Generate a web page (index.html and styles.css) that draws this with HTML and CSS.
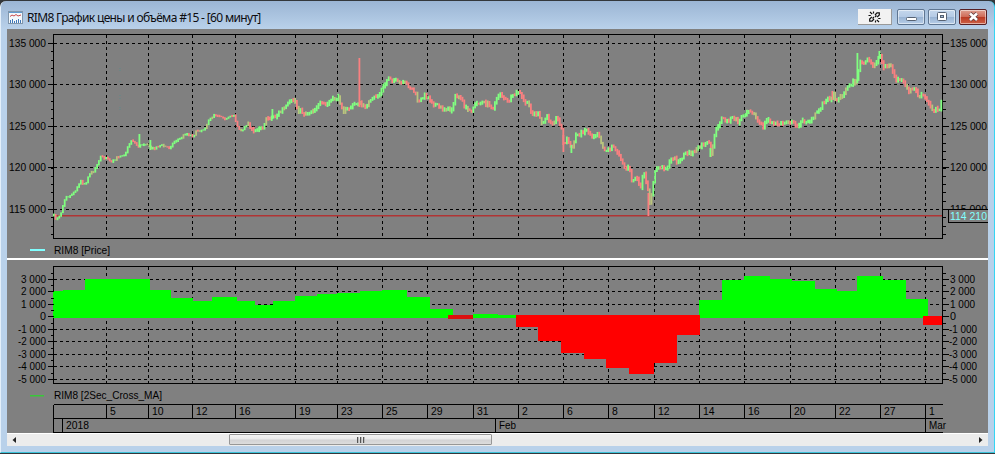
FILE: index.html
```html
<!DOCTYPE html>
<html lang="ru">
<head>
  <meta charset="UTF-8">
  <title>RIM8 График цены и объёма</title>
  <link rel="stylesheet" href="styles.css">
</head>
<body>
  <div class="window">
    <div class="titlebar">
      <svg class="app-icon" width="15" height="13" viewBox="0 0 15 13">
        <rect x="0.5" y="0.5" width="14" height="12" fill="#f4f8fb" stroke="#8196ab"/>
        <rect x="1" y="1" width="13" height="1" fill="#5f9bd0"/>
        <path d="M2 5.5l2-1.5 2 1 2-1.5 2 1.5 3-1" fill="none" stroke="#c9484c"/>
        <path d="M2.5 12V9M4.5 12V8M6.5 12v-2M8.5 12V9M10.5 12V8M12.5 12V9" stroke="#3f78b8"/>
      </svg>
      <span class="title">RIM8 График цены и объёма #15 - [60 минут]</span>
      <div class="buttons">
        <div class="link-btn">
          <svg width="13" height="12" viewBox="0 0 13 12" fill="none" stroke="#111" stroke-width="1.2">
            <path d="M7 4l2-2.200h2.300v2.200L9.200 6M6 8l-2 2.200H1.700V8L3.800 6M4.500 7.500l1.500-1.500M7 6l1.500-1.500M2 1l2.200 2.200M5.500 0.500v2M0.500 4.500h2.300M11 11L8.800 8.800M7.500 11.500v-2M12.500 7.500h-2.300"/>
          </svg>
        </div>
        <div class="win-btn">
          <svg width="26" height="14" viewBox="0 0 26 14"><rect x="8.500" y="7.500" width="10" height="3" rx="1" fill="#fff" stroke="#566273"/></svg>
        </div>
        <div class="win-btn">
          <svg width="26" height="14" viewBox="0 0 26 14"><rect x="8.500" y="2.500" width="9" height="8" rx="1" fill="#fff" stroke="#566273"/><rect x="11.500" y="5.500" width="3" height="2" fill="#a5bcd8" stroke="#566273"/></svg>
        </div>
        <div class="win-btn close">
          <svg width="26" height="14" viewBox="0 0 26 14"><path d="M10 3.500l7 6.500M17 3.500L10 10" stroke="#5d3a3c" stroke-width="4.200"/><path d="M10 3.500l7 6.500M17 3.500L10 10" stroke="#fff" stroke-width="2.600"/></svg>
        </div>
      </div>
    </div>
    <div class="content">
      <svg class="pane" id="price" width="981" height="229" viewBox="7 29 981 229"></svg>
      <div class="splitter"></div>
      <svg class="pane" id="indicator" width="981" height="173" viewBox="7 260 981 173"></svg>
      <div class="scrollbar">
        <svg width="14" height="12" viewBox="0 0 14 12"><path d="M9 3v6L5.500 6z" fill="#222"/></svg>
        <div class="track"><div class="thumb"><i></i><i></i><i></i></div></div>
        <svg width="14" height="12" viewBox="0 0 14 12"><path d="M5 3v6L8.500 6z" fill="#222"/></svg>
      </div>
    </div>
  </div>
  <script src="chart.js"></script>
</body>
</html>
```
FILE: styles.css
```css
body {
  margin: 0;
  background: #33373b;
  overflow: hidden;
}

.window {
  box-sizing: border-box;
  width: 995px;
  height: 452px;
  margin-top: 1px;
  padding: 0 6px 5px;
  border-left: 1px solid #e3effa;
  border-right: 1px solid #35d5f3;
  border-bottom: 1px solid #3cc3d9;
  border-radius: 6px 6px 0 0;
  background: linear-gradient(#9bb5d4 0, #b9d1ea 28px, #b9d1ea 100%);
}

.titlebar {
  display: flex;
  align-items: center;
  height: 28px;
  padding-top: 4px;
  padding-right: 1px;
  box-sizing: border-box;
}

.app-icon {
  margin: 0 4px 0 1px;
}

.title {
  font: 12px "Noto Sans", sans-serif;
  letter-spacing: -0.66px;
  color: #0c0c10;
  white-space: nowrap;
}

.buttons {
  display: flex;
  margin-left: auto;
  gap: 3px;
}

.link-btn {
  display: flex;
  align-items: center;
  justify-content: center;
  width: 33px;
  height: 15px;
  margin-right: 2px;
  background: #f2f2f2;
  border-right: 1px solid #9a9a9a;
  border-bottom: 1px solid #9a9a9a;
}

.win-btn {
  width: 26px;
  height: 14px;
  border: 1px solid #5f7692;
  border-radius: 2px;
  background: linear-gradient(#c5d7ec 0, #b4cae5 50%, #98b3d3 51%, #b7cee8 100%);
  box-shadow: inset 0 0 0 1px rgba(255, 255, 255, 0.5);
}

.win-btn svg {
  display: block;
}

.close {
  border-color: #571f24;
  background: linear-gradient(#dfa092 0, #cf6b58 48%, #b93822 50%, #cd6248 100%);
}

.content {
  width: 981px;
}

.pane {
  display: block;
  background: #808080;
}

.splitter {
  height: 2px;
  background: #fff;
}

.axis {
  fill: none;
  stroke: #000;
  shape-rendering: crispEdges;
}

.grid {
  stroke: #000;
  stroke-dasharray: 3 3;
  shape-rendering: crispEdges;
}

.up {
  fill: #80ff80;
}

.down {
  fill: #f98080;
}

.mixed {
  fill: #b9c47e;
}

.pos {
  fill: #00ff00;
}

.neg {
  fill: #ff0000;
}

.flat {
  fill: #dc1010;
}

.legend {
  fill: #38c838;
}

.last {
  fill: #b03434;
}

.mark {
  fill: #808080;
  stroke: #000;
}

text {
  font: 11.5px "Liberation Sans", Arial, sans-serif;
  fill: #000;
}

.mark-text {
  fill: #80ffff;
}

.ghost {
  fill: #6f8585;
}

.scrollbar {
  display: flex;
  height: 12px;
  border-top: 1px solid #fff;
  background: #ececec;
}

.track {
  flex: 1;
}

.thumb {
  display: flex;
  align-items: center;
  justify-content: center;
  gap: 1px;
  box-sizing: border-box;
  width: 263px;
  height: 11px;
  margin-left: 208px;
  border: 1px solid #979797;
  border-radius: 1px;
  background: linear-gradient(#f4f4f4 0, #e8e8e8 48%, #d2d2d4 52%, #dcdcdc 100%);
}

.thumb i {
  width: 2px;
  height: 6px;
  box-sizing: border-box;
  border-left: 1px solid #555;
  background: #bbb;
}
```
FILE: chart.js
```js
var LEFT = 53, RIGHT = 942;

var days = [[106, "5"], [148, "10"], [192, "12"], [235, "16"], [295, "19"], [337, "23"], [382, "25"],
  [427, "29"], [473, "31"], [518, "2"], [563, "6"], [608, "8"], [654, "12"], [699, "14"], [744, "16"],
  [790, "20"], [835, "22"], [880, "27"], [925, "1"]];
var months = [[62, "2018"], [495, "Feb"], [925, "Mar"]];

// x, y of the price curve
var price = [53,216, 55,219, 57,217, 60,213, 61,209, 63,201, 65,196, 69,196, 73,192, 77,186, 80,181, 83,184,
  86,181, 88,174, 92,172, 95,167, 98,160, 101,155, 103,158, 107,159, 110,163, 113,161, 118,156, 124,154,
  127,147, 131,139, 134,143, 138,147, 142,144, 146,143, 149,149, 154,148, 160,145, 168,148, 174,141, 180,138,
  185,133, 189,135, 192,136, 196,131, 203,129, 208,121, 213,114, 220,116, 226,119, 233,115, 237,127, 241,132,
  247,122, 252,133, 258,127, 262,126, 266,119, 271,117, 275,116, 280,111, 287,105, 293,99, 297,109, 304,114,
  312,110, 319,104, 325,105, 330,101, 337,97, 343,111, 350,107, 357,102, 362,107, 368,103, 374,97, 379,94,
  383,86, 388,77, 393,80, 397,83, 402,83, 408,86, 414,93, 418,103, 422,96, 427,97, 432,103, 438,108, 448,109,
  450,112, 454,97, 458,96, 463,106, 468,112, 473,106, 478,102, 487,104, 492,108, 499,92, 506,102, 512,97,
  518,91, 522,100, 528,106, 532,114, 537,114, 541,124, 546,117, 551,122, 556,118, 560,125, 563,148, 565,137,
  571,150, 575,135, 580,133, 585,129, 591,137, 597,132, 602,148, 606,150, 611,147, 618,153, 624,168, 628,168,
  631,182, 635,176, 639,189, 643,173, 646,187, 649,202, 651,192, 653,180, 655,168, 660,167, 665,168, 672,158,
  678,162, 684,153, 690,154, 697,149, 702,145, 708,143, 710,156, 713,138, 717,125, 721,118, 726,121, 732,118,
  737,122, 743,115, 748,109, 752,113, 756,120, 762,127, 767,119, 773,124, 780,124, 788,121, 795,126, 802,121,
  811,120, 816,112, 823,102, 829,98, 832,95, 835,100, 842,95, 848,85, 853,82, 857,82, 858,60, 862,64, 867,60,
  872,67, 876,60, 879,54, 882,66, 890,66, 895,80, 900,79, 905,88, 909,91, 914,89, 918,97, 922,95, 927,103,
  932,110, 936,107, 938,110, 941,100];

// single tall bars: x, top, bottom, class
var spikes = [[139, 134, 147, "up"], [150, 140, 150, "up"], [272, 109, 119, "up"], [359, 58, 107, "down"],
  [563, 135, 152, "down"], [571, 145, 153, "up"], [648, 193, 216, "down"], [710, 148, 157, "up"],
  [857, 53, 83, "up"], [832, 91, 100, "down"], [879, 51, 58, "up"]];

// x from, x to, top, bottom
var green = [[53, 63, 291, 318], [63, 85, 290, 318], [85, 150, 279, 318], [150, 171, 290, 318],
  [171, 193, 298, 318], [193, 212, 301, 318], [212, 237, 297, 318], [237, 255, 301, 318], [255, 273, 305, 318],
  [273, 295, 301, 318], [295, 317, 296, 318], [317, 337, 294, 318], [337, 360, 293, 318], [360, 382, 291, 318],
  [382, 407, 290, 318], [407, 430, 297, 318], [430, 453, 309, 318], [473, 498, 314, 318], [498, 517, 315, 318],
  [699, 722, 300, 318], [722, 744, 280, 318], [744, 770, 276, 318], [770, 792, 279, 318], [792, 815, 281, 318],
  [815, 837, 289, 318], [837, 857, 291, 318], [857, 883, 276, 318], [883, 906, 280, 318], [906, 928, 299, 318]];
var red = [[516, 538, 315, 327], [538, 561, 315, 341], [561, 584, 315, 353],
  [584, 606, 315, 359], [606, 629, 315, 368], [629, 654, 315, 374], [654, 677, 315, 363], [677, 700, 315, 335],
  [923, 942, 316, 325]];

function line(x1, y1, x2, y2, cls) {
  return '<path class="' + cls + '" d="M' + (x1 + 0.5) + ' ' + (y1 + 0.5) + 'L' + (x2 + 0.5) + ' ' + (y2 + 0.5) + '"/>';
}

function rect(x1, y1, x2, y2, cls) {
  return '<rect class="' + cls + '" x="' + x1 + '" y="' + y1 + '" width="' + (x2 - x1) + '" height="' + (y2 - y1) + '"/>';
}

function text(x, y, str, len, anchor, cls) {
  return '<text x="' + x + '" y="' + y + '" textLength="' + len + '" lengthAdjust="spacingAndGlyphs" text-anchor="' +
    (anchor || "start") + '" class="' + (cls || "") + '">' + str + '</text>';
}

function frame(top, bottom, rows) {
  var s = "";
  rows.forEach(function (r) {
    s += line(LEFT, r[0], RIGHT, r[0], "grid");
  });
  days.forEach(function (d) {
    s += line(d[0], top, d[0], bottom, "grid");
  });
  return s + '<rect class="axis" x="' + (LEFT + 0.5) + '" y="' + (top + 0.5) + '" width="' + (RIGHT - LEFT) +
    '" height="' + (bottom - top) + '"/>';
}

function scale(rows) {
  var s = "";
  rows.forEach(function (r) {
    s += line(47, r[0], LEFT, r[0], "axis") + line(RIGHT, r[0], 948, r[0], "axis");
    s += text(46, r[0] + 4, r[1], r[2], "end") + text(r[1][0] == "-" ? 949 : 950, r[0] + 4, r[1], r[2]);
  });
  return s;
}

function ticks(from, to, step) {
  var s = "";
  for (var y = from; y < to; y += step) {
    s += line(50, Math.round(y), LEFT, Math.round(y), "axis") + line(RIGHT, Math.round(y), 945, Math.round(y), "axis");
  }
  return s;
}

function candles() {
  var s = "", i = 0, seed = 7, prev = price[1];
  function rnd() {
    seed = (seed * 16807) % 2147483647;
    return seed / 2147483647;
  }
  for (var x = LEFT; x <= 941; x += 1.8) {
    while (i < price.length - 4 && price[i + 2] < x) i += 2;
    var k = (x - price[i]) / (price[i + 2] - price[i]);
    var y = price[i + 1] + (price[i + 3] - price[i + 1]) * k;
    var mid = y + (rnd() - 0.5) * (x < 250 ? 2.5 : 4);
    var size = x < 250 ? 0.8 : 1.7;
    var top = Math.min(prev, mid) - size * (0.3 + rnd() * 1.2);
    var bottom = Math.max(prev, mid) + size * (0.3 + rnd() * 1.2);
    var cls = rnd() < 0.15 ? "mixed" : mid < prev ? "up" : "down";
    s += rect(x.toFixed(1), top.toFixed(1), (x + 1.8).toFixed(1), bottom.toFixed(1), cls);
    prev = mid;
  }
  spikes.forEach(function (b) {
    s += rect(b[0] - 0.5, b[1], b[0] + 1.3, b[2], b[3]);
  });
  // faint stray ticks
  [68, 70, 81, 95, 98, 107, 109].forEach(function (y) {
    s += rect(119, y, 121, y + 1, "ghost");
  });
  return s;
}

var priceRows = [[43, "135 000", 37], [84, "130 000", 37], [126, "125 000", 37], [167, "120 000", 37], [209, "115 000", 37]];
var s = frame(34, 238, priceRows) + ticks(51.3, 238, 8.3) + scale(priceRows);
s += rect(LEFT + 1, 215, RIGHT, 216.5, "last") + candles();
s += '<rect class="mark" x="948.5" y="209.5" width="44" height="13"/>';
s += text(950, 220, "114 210", 37, "start", "mark-text");
s += rect(30, 249, 45, 251, "mark-text") + text(54, 254, "RIM8 [Price]", 56);
document.getElementById("price").innerHTML = s;

var rows = [[279, "3 000", 25], [291, "2 000", 25], [304, "1 000", 25], [316, "0", 6], [329, "-1 000", 28],
  [341, "-2 000", 28], [354, "-3 000", 28], [366, "-4 000", 28], [379, "-5 000", 28]];
s = frame(266, 383, rows);
green.forEach(function (b) {
  s += rect(b[0], b[2], b[1], b[3], "pos");
});
red.forEach(function (b) {
  s += rect(b[0], b[2], b[1], b[3], "neg");
});
s += rect(448, 315, 473, 319, "flat");
s += ticks(272.8, 383, 12.5) + scale(rows);
s += rect(30, 395, 44, 396.5, "legend") + text(54, 399, "RIM8 [2Sec_Cross_MA]", 108);

// date ruler
s += line(LEFT, 404, RIGHT, 404, "axis") + line(LEFT, 418, RIGHT, 418, "axis") + line(LEFT, 432, RIGHT, 432, "axis");
s += line(LEFT, 404, LEFT, 432, "axis");
days.forEach(function (d) {
  s += line(d[0], 404, d[0], 418, "axis") + text(d[0] + 4, 415, d[1], d[1].length * 5.8);
});
months.forEach(function (m) {
  s += line(m[0], 418, m[0], 432, "axis") + text(m[0] + 4, 429, m[1], m[1] == "2018" ? 23 : 17);
});
document.getElementById("indicator").innerHTML = s;
```
